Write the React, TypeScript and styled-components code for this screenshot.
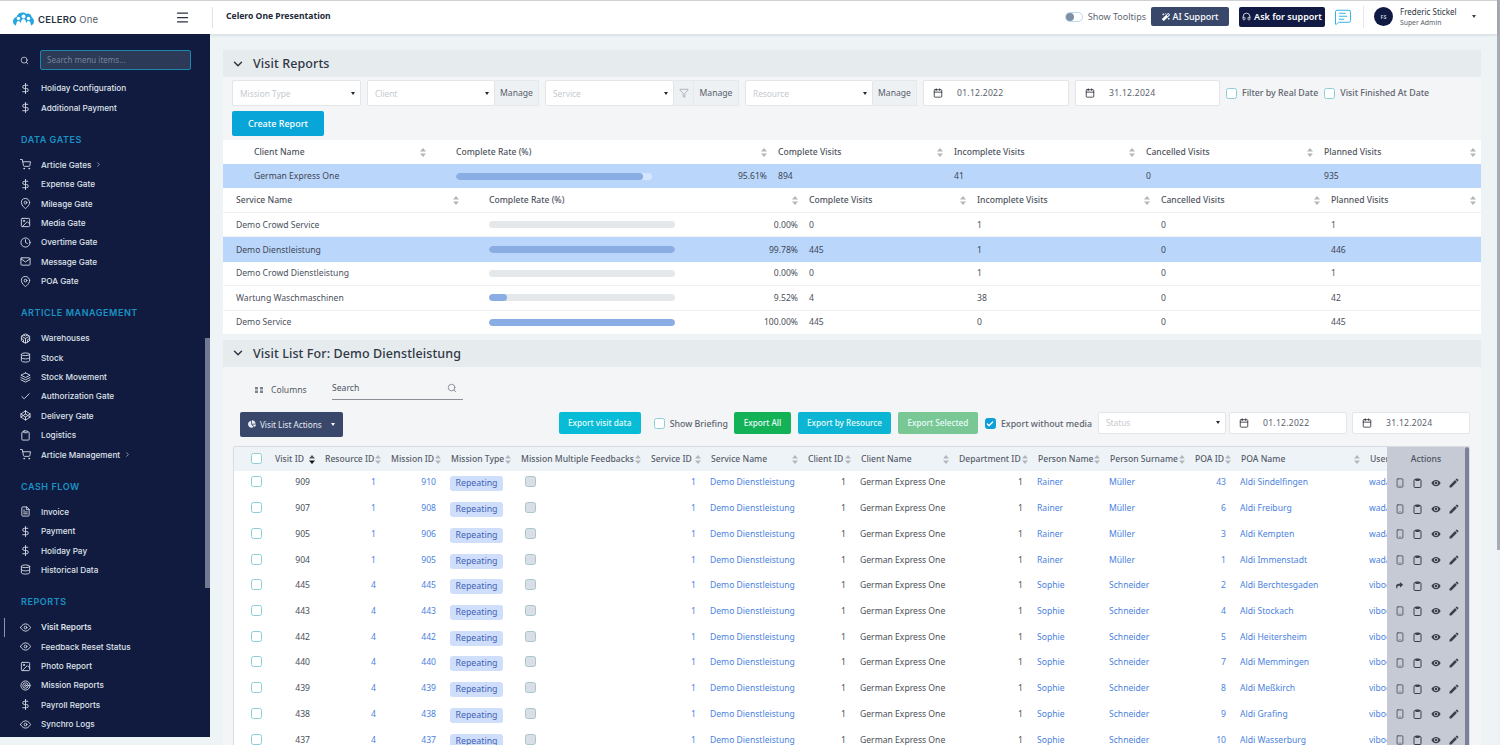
import React from "react";
import styled, { createGlobalStyle } from "styled-components";
import { Calendar, Check, ChevronDown, ChevronRight, Filter, Headphones, Menu, MessageSquareText, Search, Smartphone } from "lucide-react";
import {
  FiCheck, FiClipboard, FiClock, FiCodepen, FiCodesandbox, FiDatabase, FiDollarSign, FiEye, FiFileText,
  FiImage, FiLayers, FiMail, FiMapPin, FiSearch, FiShoppingCart, FiTarget,
} from "react-icons/fi";
import { FaChartPie, FaMagic, FaShare } from "react-icons/fa";
import { MdEdit, MdVisibility } from "react-icons/md";

const GlobalStyle = createGlobalStyle`
  html, body {
    margin: 0;
    height: 745px;
    overflow: hidden;
    background: #eef3f6;
    font-family: "Noto Sans", "Liberation Sans", sans-serif;
    font-size: 9px;
    color: #444a55;
  }
  * { box-sizing: border-box; }
`;

const Shell = styled.div`
  display: flex;
  height: 745px;
  overflow: hidden;
`;
const Page = styled.div`
  flex: 1;
  min-width: 0;
  display: flex;
  flex-direction: column;
`;
const PageScroll = styled.div`
  width: 3px;
  background: #eef1f4;
  > div { height: 550px; background: #a6abb5; }
`;

/* top bar */
const TopBar = styled.header`
  height: 34px;
  flex: none;
  display: flex;
  align-items: center;
  background: #fff;
  border-top: 1px solid #cfd1d4;
  box-shadow: 0 1px 3px rgba(40, 50, 70, .15);
  position: relative;
  z-index: 2;
`;
const Brand = styled.div`
  width: 212px;
  flex: none;
  display: flex;
  align-items: center;
  padding: 2px 22px 0 13px;
  gap: 4px;
`;
const BrandName = styled.span`
  font-family: "Inter", sans-serif;
  font-size: 9.5px;
  letter-spacing: .2px;
  font-weight: 600;
  color: #28323f;
  margin-top: 1px;
  > em { font-style: normal; font-weight: 400; color: #555e69; }
`;
const Burger = styled.div`
  margin-left: auto;
  display: flex;
  margin-top: -3px;
  color: #2b3240;
`;
const Title = styled.div`
  border-left: 1px solid #dfe2e5;
  height: 21px;
  line-height: 19px;
  padding-left: 13px;
  font-size: 8.6px;
  font-weight: 700;
  color: #232a38;
  margin-top: -1px;
`;
const TopRight = styled.div`
  margin-left: auto;
  display: flex;
  align-items: center;
  padding-right: 21px;
  margin-top: -2px;
`;
const Toggle = styled.div`
  width: 18px;
  height: 10px;
  border-radius: 5px;
  border: 1px solid #b9d9ea;
  background: #fff;
  display: flex;
  align-items: center;
  &::before {
    content: "";
    width: 8px;
    height: 8px;
    border-radius: 50%;
    background: #7d8fa6;
  }
`;
const ToggleLabel = styled.span`
  margin: 0 5px;
  color: #616873;
  font-size: 9px;
`;
const TopButton = styled.div<{ $dark?: boolean }>`
  height: ${p => (p.$dark ? 20 : 19)}px;
  width: ${p => (p.$dark ? 86 : 78)}px;
  margin-left: ${p => (p.$dark ? 10 : 0)}px;
  border-radius: 2px;
  background: ${p => (p.$dark ? "#101a42" : "#39486a")};
  color: #fff;
  font-size: 9px;
  font-weight: ${p => (p.$dark ? 600 : 500)};
  display: flex;
  align-items: center;
  justify-content: center;
  gap: 3px;
`;
const ChatIcon = styled.div`
  display: flex;
  color: #2eb1e2;
  margin-left: 9px;
`;
const UserBox = styled.div`
  margin-left: 11px;
  padding-left: 10px;
  border-left: 1px solid #e5e7ea;
  height: 22px;
  display: flex;
  align-items: center;
`;
const Avatar = styled.div`
  width: 19px;
  height: 19px;
  border-radius: 50%;
  background: #101a42;
  color: #cfd6e4;
  font-size: 5.5px;
  font-weight: 600;
  display: flex;
  align-items: center;
  justify-content: center;
`;
const UserText = styled.div`
  margin-left: 7px;
  width: 72px;
  font-size: 8px;
  line-height: 11px;
  color: #2d3442;
  > small { display: block; font-size: 6.8px; color: #555d6a; }
`;
const Caret = styled.span`
  width: 0;
  height: 0;
  border-left: 2.5px solid transparent;
  border-right: 2.5px solid transparent;
  border-top: 3px solid #3a3f48;
  margin-left: ${p => p.theme?.offset ?? 0}px;
`;

/* sidebar */
const Body = styled.div`
  flex: 1;
  min-height: 0;
  display: flex;
  overflow: hidden;
`;
const SideColumn = styled.div`
  width: 210px;
  flex: none;
`;
const Sidebar = styled.aside`
  height: 703px;
  background: #111a3f;
  display: flex;
  padding-bottom: 8px;
`;
const SideNav = styled.nav`
  flex: 1;
  min-width: 0;
  overflow: hidden;
  padding-top: 16px;
`;
const SideScroll = styled.div`
  width: 5px;
  flex: none;
  margin-top: 304px;
  height: 250px;
  background: #727a93;
`;
const SideSearch = styled.div`
  display: flex;
  align-items: center;
  padding-left: 20px;
  gap: 11px;
  color: #dfe3ea;
  margin-bottom: 8.5px;
`;
const SideInput = styled.div`
  width: 151px;
  height: 20px;
  background: #2d3a57;
  border: 1px solid #1c86ad;
  border-radius: 2px;
  padding-left: 6px;
  line-height: 17px;
  font-size: 8px;
  color: #76829a;
`;
const GroupTitle = styled.div`
  height: 20px;
  line-height: 20px;
  margin: 12.8px 0 5.3px;
  padding-left: 21px;
  font-family: "Inter", sans-serif;
  font-size: 9px;
  font-weight: 600;
  letter-spacing: .55px;
  color: #1b93c4;
`;
const NavItem = styled.div<{ $active?: boolean }>`
  position: relative;
  height: 19.35px;
  display: flex;
  align-items: center;
  padding-left: 20px;
  gap: 10px;
  font-family: "Inter", sans-serif;
  font-size: 8.2px;
  font-weight: ${p => (p.$active ? 600 : 500)};
  color: #dfe3ea;
  white-space: nowrap;
  ${p => p.$active && `
    &::before {
      content: "";
      position: absolute;
      left: 4px;
      top: 0;
      bottom: 0;
      width: 1px;
      background: #8d95aa;
    }
  `}
`;
const NavIcon = styled.span`
  width: 11px;
  display: flex;
  justify-content: center;
  color: #d8dde6;
`;

/* main */
const Main = styled.main`
  flex: 1;
  min-width: 0;
  padding: 16px 16px 0 13px;
  overflow: hidden;
`;
const SectionHeader = styled.div`
  height: 27px;
  background: #e6ebee;
  display: flex;
  align-items: center;
  gap: 8px;
  padding-left: 8px;
  font-size: 12.5px;
  font-weight: 500;
  color: #2f3744;
  letter-spacing: .1px;
`;
const FilterPanel = styled.div`
  background: #f4f5f6;
  padding: 3px 0 4px 9px;
`;
const FilterRow = styled.div`
  display: flex;
  align-items: center;
  height: 26px;
`;
const SelectBox = styled.div<{ $width: number; $gap?: number }>`
  width: ${p => p.$width}px;
  margin-left: ${p => p.$gap ?? 0}px;
  flex: none;
  height: 26px;
  background: #fff;
  border: 1px solid #e3e5e8;
  border-radius: 2px;
  display: flex;
  align-items: center;
  justify-content: space-between;
  padding: 0 5px 0 7px;
  font-size: 8.3px;
  color: #c6cad0;
`;
const Arrow = styled.span`
  width: 0;
  height: 0;
  border-left: 2.5px solid transparent;
  border-right: 2.5px solid transparent;
  border-top: 3px solid #23272e;
`;
const Addon = styled.div<{ $width: number }>`
  width: ${p => p.$width}px;
  flex: none;
  height: 26px;
  background: #edf1f4;
  border: 1px solid #e6e9ec;
  border-left: none;
  display: flex;
  align-items: center;
  justify-content: center;
  font-size: 8.6px;
  color: #59606c;
`;
const DateBox = styled.div<{ $width: number; $gap: number; $small?: boolean }>`
  width: ${p => p.$width}px;
  margin-left: ${p => p.$gap}px;
  height: ${p => (p.$small ? 22 : 26)}px;
  flex: none;
  background: #fff;
  border: 1px solid #e3e5e8;
  border-radius: 2px;
  display: flex;
  align-items: center;
  padding-left: 9px;
  gap: 14px;
  font-size: 8.6px;
  letter-spacing: .25px;
  color: #5a616c;
  > svg { color: #2a2f38; }
`;
const CheckLabel = styled.label<{ $gap: number }>`
  display: flex;
  align-items: center;
  margin-left: ${p => p.$gap}px;
  gap: 5px;
  font-size: 8.8px;
  font-weight: 500;
  color: #5d646f;
  white-space: nowrap;
`;
const Tick = styled.span<{ $on?: boolean; $disabled?: boolean }>`
  width: 11px;
  height: 11px;
  flex: none;
  border-radius: 2.5px;
  border: 1px solid ${p => (p.$on ? "#0d9fd8" : p.$disabled ? "#a9c6cd" : "#8bced8")};
  background: ${p => (p.$on ? "#0d9fd8" : p.$disabled ? "#d9dee7" : "#fff")};
  color: #fff;
  display: flex;
  align-items: center;
  justify-content: center;
`;
const CreateButton = styled.div`
  width: 92px;
  height: 25px;
  margin-top: 5px;
  border-radius: 2px;
  background: #08a5d8;
  color: #fff;
  font-size: 9px;
  font-weight: 500;
  display: flex;
  align-items: center;
  justify-content: center;
`;

/* report tables */
const ReportCard = styled.div`
  background: #fff;
  margin-bottom: 5px;
`;
const ReportGrid = styled.div<{ $cols: string; $lead: number; $height: number; $selected?: boolean; $line?: boolean }>`
  display: grid;
  grid-template-columns: ${p => p.$cols};
  height: ${p => p.$height}px;
  align-items: center;
  background: ${p => (p.$selected ? "#bbd6fb" : "#fff")};
  border-bottom: ${p => (p.$line ? "1px solid #f0f1f3" : "none")};
  color: ${p => (p.$selected ? "#3c4656" : "#4a505b")};
  font-size: 8.6px;
  > div {
    padding: 0 5px 0 6px;
    white-space: nowrap;
    overflow: hidden;
  }
  > div:first-child { padding-left: ${p => p.$lead}px; padding-right: 24px; }
`;
const HeadCell = styled.div`
  display: flex;
  align-items: center;
  justify-content: space-between;
  font-weight: 500;
  color: #4f5560;
`;
const RateCell = styled.div`
  display: flex;
  align-items: center;
  justify-content: space-between;
`;
const Bar = styled.div<{ $width: number; $light?: boolean }>`
  width: ${p => p.$width}px;
  height: 7px;
  border-radius: 4px;
  background: ${p => (p.$light ? "#d5e5fb" : "#e5e8ea")};
  overflow: hidden;
  > div { height: 100%; background: #8aaee4; border-radius: 4px; }
`;

/* visit list */
const ListPanel = styled.div`
  background: #f3f5f6;
  padding: 13px 11px 0 10px;
`;
const ColumnsRow = styled.div`
  display: flex;
  align-items: center;
  height: 20px;
  padding-left: 22px;
  font-size: 8.6px;
  color: #555c67;
`;
const ColumnsLabel = styled.div`
  display: flex;
  align-items: center;
  gap: 8px;
  width: 77px;
`;
const SearchBox = styled.div`
  width: 131px;
  height: 21px;
  border-bottom: 1px solid #8b9097;
  display: flex;
  align-items: center;
  justify-content: space-between;
  padding: 0 6px 2px 0;
  color: #4c535e;
  > svg { color: #7b828c; }
`;
const ActionsRow = styled.div`
  display: flex;
  align-items: flex-start;
  margin-top: 12px;
  padding-left: 7px;
  height: 34px;
`;
const ActionsDropdown = styled.div`
  width: 107px;
  height: 25px;
  border-radius: 2px;
  background: #39486a;
  color: #e6e9f0;
  font-size: 8.2px;
  display: flex;
  align-items: center;
  justify-content: center;
  gap: 4px;
  margin-right: 216px;
  > span { margin-left: 5px; border-top-color: #fff; }
`;
const ExportButton = styled.div<{ $width: number; $bg: string; $gap: number }>`
  width: ${p => p.$width}px;
  margin-left: ${p => p.$gap}px;
  flex: none;
  height: 22px;
  border-radius: 2px;
  background: ${p => p.$bg};
  color: #e9fbfb;
  font-size: 8.2px;
  font-weight: 500;
  display: flex;
  align-items: center;
  justify-content: center;
`;
const ToolCheck = styled(CheckLabel)`
  height: 24px;
`;
const VisitTable = styled.div`
  display: flex;
  width: 1237px;
  background: #fff;
  border: 1px solid #d8dbe3;
  border-bottom: none;
  border-radius: 2px 2px 0 0;
`;
const VisitScroller = styled.div`
  flex: 1;
  min-width: 0;
  overflow: hidden;
`;
const VisitRow = styled.div<{ $head?: boolean }>`
  display: grid;
  grid-template-columns: 36px 50px 66px 60px 70px 130px 60px 97px 53px 98px 79px 72px 85px 46px 129px 60px;
  width: 1191px;
  height: ${p => (p.$head ? 24.5 : 25.72)}px;
  background: ${p => (p.$head ? "#eef3f8" : "#fff")};
`;
const VisitHead = styled.div`
  display: flex;
  align-items: center;
  justify-content: space-between;
  padding: 0 5px 0 5px;
  font-size: 8.6px;
  font-weight: 500;
  color: #575d68;
  white-space: nowrap;
  overflow: hidden;
`;
const TickCell = styled.div<{ $head?: boolean }>`
  padding: ${p => (p.$head ? 6 : 5)}px 0 0 17px;
`;
const VisitCell = styled.div<{ $right?: boolean; $link?: boolean }>`
  line-height: 22px;
  font-size: 8.6px;
  padding: ${p => (p.$right ? "0 10px 0 0" : "0 0 0 4px")};
  text-align: ${p => (p.$right ? "right" : "left")};
  color: ${p => (p.$link ? "#4a82e0" : "#4a4f58")};
  white-space: nowrap;
`;
const Chip = styled.span`
  display: block;
  width: 53px;
  height: 15px;
  margin: 5px 0 0 4px;
  border-radius: 3px;
  background: #cfdffb;
  color: #3f62b5;
  font-size: 8.8px;
  line-height: 15px;
  text-align: center;
`;
const FeedbackCell = styled.div`
  padding: 5px 0 0 9px;
`;
const ActionsPane = styled.div`
  width: 78px;
  flex: none;
  background: #c5cad4;
`;
const ActionsHead = styled.div`
  height: 24.5px;
  line-height: 24px;
  text-align: center;
  font-size: 8.6px;
  font-weight: 500;
  color: #4d5360;
`;
const ActionsCell = styled.div`
  height: 25.72px;
  display: grid;
  grid-template-columns: 17px 18px 19px 18px;
  padding: 0 0 3px 4px;
  align-items: center;
  justify-items: center;
  color: #3b404b;
`;
const TableScroll = styled.div`
  width: 4px;
  flex: none;
  background: #7b819b;
  border-radius: 2px 2px 0 0;
`;

const RollIcon = () => (
  <svg width="9" height="10" viewBox="0 0 9 10">
    <rect x="1" y="1.5" width="7" height="8" rx="1" fill="none" stroke="currentColor" strokeWidth="1" />
    <rect x="2.5" y=".5" width="4" height="2.5" fill="currentColor" />
  </svg>
);

const SortIcon = ({ active }: { active?: boolean }) => (
  <svg width="6" height="9" viewBox="0 0 6 9" style={{ flex: "none" }}>
    <path d="M3 0 6 3.6H0Z" fill={active ? "#555" : "#b3b6ba"} />
    <path d="M3 9 0 5.4H6Z" fill={active ? "#111" : "#b3b6ba"} />
  </svg>
);

const Logo = () => (
  <svg width="21" height="14" viewBox="0 0 21 14">
    <path d="M5 14C2 14 0 12 0 9.3 0 7 1.500 5.300 3.500 5 4.300 2.300 6.500.5 9.500.5c1.500 0 2.700.5 3.700 1.400C14 1.400 15 1.300 16 1.700c1.700.6 2.600 2 2.700 3.600C20 6.100 21 7.600 21 9.300 21 12 19 14 16.500 14Z" fill="#27a5de" />
    <circle cx="5.500" cy="6.500" r="1.700" fill="#fff" />
    <circle cx="10.500" cy="4.500" r="2" fill="#fff" />
    <circle cx="15.500" cy="6.500" r="1.700" fill="#fff" />
    <path d="M3 14c0-3 1-5 2.500-5S8 11 8 14ZM7.500 14c0-4 1-7 3-7s3 3 3 7ZM13 14c0-3 1-5 2.500-5S18 11 18 14Z" fill="#fff" />
  </svg>
);

const ColumnsIcon = () => (
  <svg width="8" height="6" viewBox="0 0 8 6">
    <path d="M0 0h3v2.500H0zM5 0h3v2.500H5zM0 3.500h3V6H0zM5 3.500h3V6H5z" fill="#7d838c" />
  </svg>
);

type NavEntry = { label: string; icon: React.ReactNode; more?: boolean; active?: boolean };
const i = 11;
const dollar = <FiDollarSign size={i} />;
const navGroups: { title?: string; items: NavEntry[] }[] = [
  { items: [{ label: "Holiday Configuration", icon: dollar }, { label: "Additional Payment", icon: dollar }] },
  {
    title: "DATA GATES",
    items: [
      { label: "Article Gates", icon: <FiShoppingCart size={i} />, more: true },
      { label: "Expense Gate", icon: dollar },
      { label: "Mileage Gate", icon: <FiMapPin size={i} /> },
      { label: "Media Gate", icon: <FiImage size={i} /> },
      { label: "Overtime Gate", icon: <FiClock size={i} /> },
      { label: "Message Gate", icon: <FiMail size={i} /> },
      { label: "POA Gate", icon: <FiMapPin size={i} /> },
    ],
  },
  {
    title: "ARTICLE MANAGEMENT",
    items: [
      { label: "Warehouses", icon: <FiCodesandbox size={i} /> },
      { label: "Stock", icon: <FiDatabase size={i} /> },
      { label: "Stock Movement", icon: <FiLayers size={i} /> },
      { label: "Authorization Gate", icon: <FiCheck size={i} /> },
      { label: "Delivery Gate", icon: <FiCodepen size={i} /> },
      { label: "Logistics", icon: <FiClipboard size={i} /> },
      { label: "Article Management", icon: <FiShoppingCart size={i} />, more: true },
    ],
  },
  {
    title: "CASH FLOW",
    items: [
      { label: "Invoice", icon: <FiFileText size={i} /> },
      { label: "Payment", icon: dollar },
      { label: "Holiday Pay", icon: dollar },
      { label: "Historical Data", icon: <FiDatabase size={i} /> },
    ],
  },
  {
    title: "REPORTS",
    items: [
      { label: "Visit Reports", icon: <FiEye size={i} />, active: true },
      { label: "Feedback Reset Status", icon: <FiEye size={i} /> },
      { label: "Photo Report", icon: <FiImage size={i} /> },
      { label: "Mission Reports", icon: <FiTarget size={i} /> },
      { label: "Payroll Reports", icon: dollar },
      { label: "Synchro Logs", icon: <FiEye size={i} /> },
    ],
  },
];

const clientCols = "227px 322px 176px 192px 178px 163px";
const serviceCols = "260px 320px 168px 184px 170px 156px";
const heads = ["Complete Visits", "Incomplete Visits", "Cancelled Visits", "Planned Visits"];
const services = [
  { name: "Demo Crowd Service", rate: 0, complete: 0, incomplete: 1, planned: 1 },
  { name: "Demo Dienstleistung", rate: 99.78, complete: 445, incomplete: 1, planned: 446, selected: true },
  { name: "Demo Crowd Dienstleistung", rate: 0, complete: 0, incomplete: 1, planned: 1 },
  { name: "Wartung Waschmaschinen", rate: 9.52, complete: 4, incomplete: 38, planned: 42 },
  { name: "Demo Service", rate: 100, complete: 445, incomplete: 0, planned: 445 },
];

const visitHeads = ["Visit ID", "Resource ID", "Mission ID", "Mission Type", "Mission Multiple Feedbacks", "Service ID", "Service Name", "Client ID", "Client Name", "Department ID", "Person Name", "Person Surname", "POA ID", "POA Name"];
const visits: [number, number, number, number, string][] = [
  [909, 1, 910, 43, "Aldi Sindelfingen"],
  [907, 1, 908, 6, "Aldi Freiburg"],
  [905, 1, 906, 3, "Aldi Kempten"],
  [904, 1, 905, 1, "Aldi Immenstadt"],
  [445, 4, 445, 2, "Aldi Berchtesgaden"],
  [443, 4, 443, 4, "Aldi Stockach"],
  [442, 4, 442, 5, "Aldi Heitersheim"],
  [440, 4, 440, 7, "Aldi Memmingen"],
  [439, 4, 439, 8, "Aldi Meßkirch"],
  [438, 4, 438, 9, "Aldi Grafing"],
  [437, 4, 437, 10, "Aldi Wasserburg"],
];

function Sidenav() {
  return (
    <Sidebar>
      <SideNav>
        <SideSearch>
          <Search size={9} />
          <SideInput>Search menu items...</SideInput>
        </SideSearch>
        {navGroups.map((group, g) => (
          <div key={g}>
            {group.title && <GroupTitle>{group.title}</GroupTitle>}
            {group.items.map(item => (
              <NavItem key={item.label} $active={item.active}>
                <NavIcon>{item.icon}</NavIcon>
                {item.label}
                {item.more && <ChevronRight size={7} style={{ marginLeft: -6 }} />}
              </NavItem>
            ))}
          </div>
        ))}
      </SideNav>
      <SideScroll />
    </Sidebar>
  );
}

function Filters() {
  return (
    <FilterPanel>
      <FilterRow>
        <SelectBox $width={129}>Mission Type<Arrow /></SelectBox>
        <SelectBox $width={128} $gap={6}>Client<Arrow /></SelectBox>
        <Addon $width={44}>Manage</Addon>
        <SelectBox $width={129} $gap={6}>Service<Arrow /></SelectBox>
        <Addon $width={20}><Filter size={10} strokeWidth={1} /></Addon>
        <Addon $width={45}>Manage</Addon>
        <SelectBox $width={128} $gap={6}>Resource<Arrow /></SelectBox>
        <Addon $width={44}>Manage</Addon>
        <DateBox $width={146} $gap={6}><Calendar size={10} />01.12.2022</DateBox>
        <DateBox $width={145} $gap={6}><Calendar size={10} />31.12.2024</DateBox>
        <CheckLabel $gap={6}><Tick />Filter by Real Date</CheckLabel>
        <CheckLabel $gap={6}><Tick />Visit Finished At Date</CheckLabel>
      </FilterRow>
      <CreateButton>Create Report</CreateButton>
    </FilterPanel>
  );
}

function ReportTables() {
  return (
    <ReportCard>
      <ReportGrid $cols={clientCols} $lead={31} $height={24}>
        <HeadCell>Client Name<SortIcon /></HeadCell>
        <HeadCell>Complete Rate (%)<SortIcon /></HeadCell>
        {heads.map(h => <HeadCell key={h}>{h}<SortIcon /></HeadCell>)}
      </ReportGrid>
      <ReportGrid $cols={clientCols} $lead={31} $height={24} $selected>
        <div>German Express One</div>
        <RateCell>
          <Bar $width={196} $light><div style={{ width: "95.61%" }} /></Bar>95.61%
        </RateCell>
        <div>894</div>
        <div>41</div>
        <div>0</div>
        <div>935</div>
      </ReportGrid>
      <ReportGrid $cols={serviceCols} $lead={13} $height={25} $line>
        <HeadCell>Service Name<SortIcon /></HeadCell>
        <HeadCell>Complete Rate (%)<SortIcon /></HeadCell>
        {heads.map(h => <HeadCell key={h}>{h}<SortIcon /></HeadCell>)}
      </ReportGrid>
      {services.map(s => (
        <ReportGrid key={s.name} $cols={serviceCols} $lead={13} $height={24.4} $line={!s.selected} $selected={s.selected}>
          <div>{s.name}</div>
          <RateCell>
            <Bar $width={186}><div style={{ width: `${s.rate}%` }} /></Bar>
            {s.rate.toFixed(2)}%
          </RateCell>
          <div>{s.complete}</div>
          <div>{s.incomplete}</div>
          <div>0</div>
          <div>{s.planned}</div>
        </ReportGrid>
      ))}
    </ReportCard>
  );
}

function VisitList() {
  return (
    <ListPanel>
      <ColumnsRow>
        <ColumnsLabel><ColumnsIcon />Columns</ColumnsLabel>
        <SearchBox>Search<FiSearch size={10} /></SearchBox>
      </ColumnsRow>
      <ActionsRow>
        <ActionsDropdown><FaChartPie size={8} />Visit List Actions<Arrow /></ActionsDropdown>
        <ExportButton $width={82} $bg="#06bcd6" $gap={0}>Export visit data</ExportButton>
        <ToolCheck $gap={13}><Tick />Show Briefing</ToolCheck>
        <ExportButton $width={57} $bg="#14b257" $gap={6}>Export All</ExportButton>
        <ExportButton $width={93} $bg="#0bb5d3" $gap={7}>Export by Resource</ExportButton>
        <ExportButton $width={80} $bg="#79c795" $gap={7}>Export Selected</ExportButton>
        <ToolCheck $gap={7}><Tick $on><Check size={8} strokeWidth={4} /></Tick>Export without media</ToolCheck>
        <SelectBox $width={128} $gap={6} style={{ height: 22 }}>Status<Arrow /></SelectBox>
        <DateBox $width={118} $gap={3} $small><Calendar size={10} />01.12.2022</DateBox>
        <DateBox $width={118} $gap={5} $small><Calendar size={10} />31.12.2024</DateBox>
      </ActionsRow>
      <VisitTable>
        <VisitScroller>
          <VisitRow $head>
            <TickCell $head><Tick /></TickCell>
            {visitHeads.map((h, n) => <VisitHead key={h}>{h}<SortIcon active={n === 0} /></VisitHead>)}
            <VisitHead>User</VisitHead>
          </VisitRow>
          {visits.map(([id, res, mission, poa, poaName]) => {
            const sophie = res === 4;
            return (
              <VisitRow key={id}>
                <TickCell><Tick /></TickCell>
                <VisitCell $right>{id}</VisitCell>
                <VisitCell $right $link>{res}</VisitCell>
                <VisitCell $right $link>{mission}</VisitCell>
                <div><Chip>Repeating</Chip></div>
                <FeedbackCell><Tick $disabled /></FeedbackCell>
                <VisitCell $right $link>1</VisitCell>
                <VisitCell $link>Demo Dienstleistung</VisitCell>
                <VisitCell $right>1</VisitCell>
                <VisitCell>German Express One</VisitCell>
                <VisitCell $right>1</VisitCell>
                <VisitCell $link>{sophie ? "Sophie" : "Rainer"}</VisitCell>
                <VisitCell $link>{sophie ? "Schneider" : "Müller"}</VisitCell>
                <VisitCell $right $link>{poa}</VisitCell>
                <VisitCell $link>{poaName}</VisitCell>
                <VisitCell $link>{sophie ? "viboc" : "wadan"}</VisitCell>
              </VisitRow>
            );
          })}
        </VisitScroller>
        <ActionsPane>
          <ActionsHead>Actions</ActionsHead>
          {visits.map(([id]) => (
            <ActionsCell key={id}>
              {id === 445 ? <FaShare size={7} /> : <Smartphone size={10} strokeWidth={1.8} />}
              <RollIcon />
              <MdVisibility size={10} />
              <MdEdit size={12} />
            </ActionsCell>
          ))}
        </ActionsPane>
        <TableScroll />
      </VisitTable>
    </ListPanel>
  );
}

export default function App() {
  return (
    <>
      <GlobalStyle />
      <Shell>
        <Page>
          <TopBar>
            <Brand>
              <Logo />
              <BrandName>CELERO <em>One</em></BrandName>
              <Burger><Menu size={15} /></Burger>
            </Brand>
            <Title>Celero One Presentation</Title>
            <TopRight>
              <Toggle />
              <ToggleLabel>Show Tooltips</ToggleLabel>
              <TopButton><FaMagic size={8} />AI Support</TopButton>
              <TopButton $dark><Headphones size={9} />Ask for support</TopButton>
              <ChatIcon><MessageSquareText size={18} strokeWidth={1.3} /></ChatIcon>
              <UserBox>
                <Avatar>FS</Avatar>
                <UserText>Frederic Stickel<small>Super Admin</small></UserText>
                <Caret />
              </UserBox>
            </TopRight>
          </TopBar>
          <Body>
            <SideColumn><Sidenav /></SideColumn>
            <Main>
              <SectionHeader><ChevronDown size={14} strokeWidth={2.5} />Visit Reports</SectionHeader>
              <Filters />
              <ReportTables />
              <SectionHeader><ChevronDown size={14} strokeWidth={2.5} />Visit List For: Demo Dienstleistung</SectionHeader>
              <VisitList />
            </Main>
          </Body>
        </Page>
        <PageScroll><div /></PageScroll>
      </Shell>
    </>
  );
}
